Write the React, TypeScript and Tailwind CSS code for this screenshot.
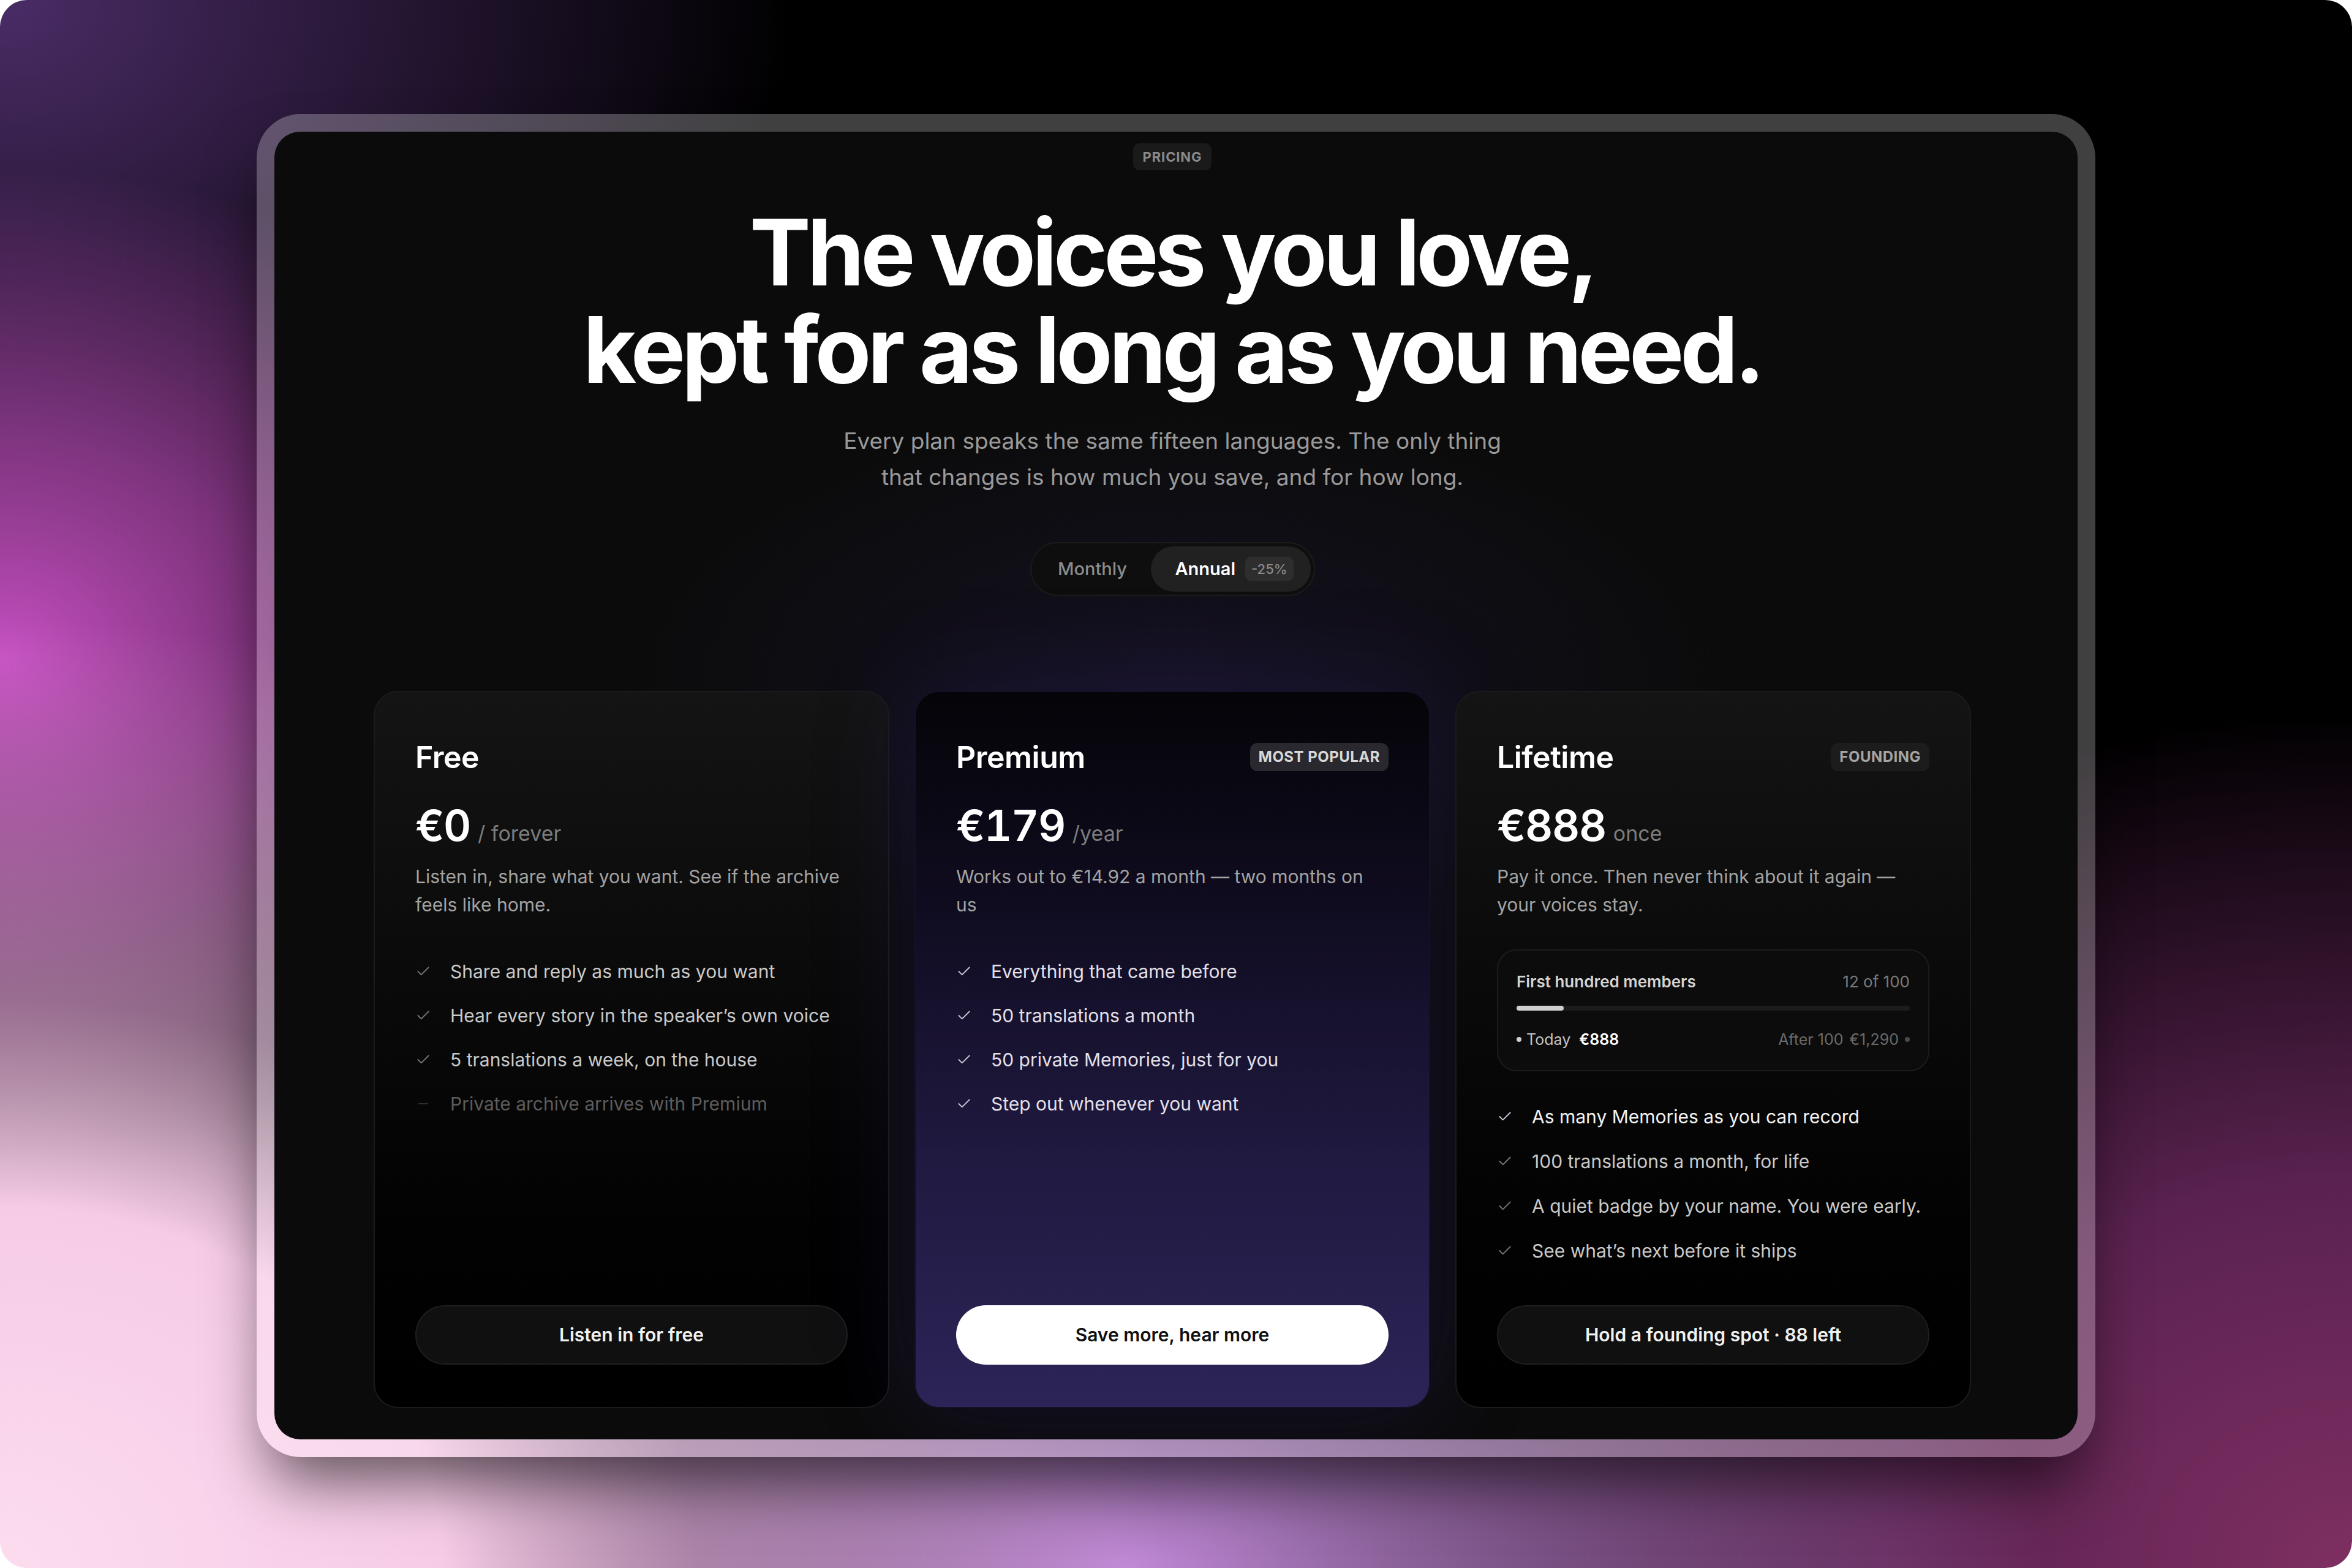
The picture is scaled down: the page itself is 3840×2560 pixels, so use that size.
import { Check, Minus } from 'lucide-react'

type Feature = { text: string; off?: boolean; strong?: boolean }

type Plan = {
  name: string
  badge?: string
  price: string
  unit: string
  note: string
  features: Feature[]
  cta: string
  featured?: boolean
  founding?: boolean
}

const plans: Plan[] = [
  {
    name: 'Free',
    price: '€0',
    unit: '/ forever',
    note: 'Listen in, share what you want. See if the archive feels like home.',
    features: [
      { text: 'Share and reply as much as you want' },
      { text: 'Hear every story in the speaker’s own voice' },
      { text: '5 translations a week, on the house' },
      { text: 'Private archive arrives with Premium', off: true },
    ],
    cta: 'Listen in for free',
  },
  {
    name: 'Premium',
    badge: 'MOST POPULAR',
    price: '€179',
    unit: '/year',
    note: 'Works out to €14.92 a month — two months on us',
    features: [
      { text: 'Everything that came before' },
      { text: '50 translations a month' },
      { text: '50 private Memories, just for you' },
      { text: 'Step out whenever you want' },
    ],
    cta: 'Save more, hear more',
    featured: true,
  },
  {
    name: 'Lifetime',
    badge: 'FOUNDING',
    price: '€888',
    unit: 'once',
    note: 'Pay it once. Then never think about it again — your voices stay.',
    features: [
      { text: 'As many Memories as you can record', strong: true },
      { text: '100 translations a month, for life' },
      { text: 'A quiet badge by your name. You were early.' },
      { text: 'See what’s next before it ships' },
    ],
    cta: 'Hold a founding spot · 88 left',
    founding: true,
  },
]

function FoundingMeter() {
  return (
    <div className="mt-[50px] rounded-[32px] border-2 border-[#1c1c1c] bg-[#0c0c0c] px-[30px] pt-[33px] pb-[32px]">
      <div className="flex items-center justify-between text-[26px] leading-[36px]">
        <span className="font-semibold text-[#d4d4d4]">First hundred members</span>
        <span className="text-[#7a7a7a]">12 of 100</span>
      </div>
      <div className="mt-[21px] h-[8px] rounded-full bg-[#1c1c1c]">
        <div className="h-full w-[12%] rounded-full bg-[#cfcfcf]" />
      </div>
      <div className="mt-[29px] flex items-center justify-between text-[25px] leading-[36px]">
        <span className="flex items-center gap-[8px] text-[#c4c4c4]">
          <span className="h-[8px] w-[8px] rounded-full bg-[#cfcfcf]" />
          Today
          <span className="ml-[6px] font-semibold text-white">€888</span>
        </span>
        <span className="flex items-center gap-[10px] text-[#6a6a6a]">
          After 100 <span>€1,290</span>
          <span className="h-[8px] w-[8px] rounded-full bg-[#4a4a4a]" />
        </span>
      </div>
    </div>
  )
}

function PlanCard({ plan }: { plan: Plan }) {
  const featured = plan.featured
  return (
    <div
      className={
        featured
          ? 'flex h-[1171px] flex-col rounded-[40px] border-2 border-[#141126] bg-[linear-gradient(180deg,#050408_0%,#100c20_30%,#201940_65%,#2c2457_100%)] px-[66px] pt-[76px] pb-[69px] shadow-[0_0_160px_10px_rgba(60,40,140,0.22)]'
          : 'flex h-[1171px] flex-col rounded-[40px] border-2 border-[#1b1b1b] bg-[linear-gradient(180deg,#141414_0%,#0a0a0a_40%,#020202_75%,#000_100%)] px-[66px] pt-[76px] pb-[69px]'
      }
    >
      {/* Name + badge */}
      <div className="flex h-[60px] items-center justify-between">
        <h3 className="text-[50px] font-semibold tracking-[-0.01em] text-white">{plan.name}</h3>
        {plan.badge && (
          <span
            className={
              featured
                ? 'flex h-[46px] items-center rounded-[12px] bg-[#29282e] px-[14px] text-[24px] font-bold tracking-[0.02em] text-[#d8d8d8]'
                : 'flex h-[46px] items-center rounded-[12px] bg-[#1c1c1c] px-[14px] text-[24px] font-bold tracking-[0.02em] text-[#a4a4a4]'
            }
          >
            {plan.badge}
          </span>
        )}
      </div>

      {/* Price */}
      <div className="mt-[47px] flex items-baseline gap-[12px]">
        <span className="text-[70px] leading-[70px] font-semibold tracking-[-0.02em] text-white tabular-nums">
          {plan.price}
        </span>
        <span className="text-[34px] text-[#7c7c7c]">{plan.unit}</span>
      </div>

      <p className="mt-[22px] text-[30px] leading-[46px] text-[#a3a3a3]">{plan.note}</p>

      {plan.founding && <FoundingMeter />}

      {/* Features */}
      <ul className={plan.founding ? 'mt-[52px] flex flex-col gap-[29px]' : 'mt-[64px] flex flex-col gap-[28px]'}>
        {plan.features.map((f) => (
          <li key={f.text} className="flex items-center gap-[31px] text-[30px] leading-[44px]">
            {f.off ? (
              <Minus size={26} strokeWidth={1.5} className="shrink-0 text-[#3c3c3c]" />
            ) : (
              <Check
                size={26}
                strokeWidth={1.75}
                className={
                  featured || f.strong ? 'shrink-0 text-[#c9c6d6]' : 'shrink-0 text-[#767676]'
                }
              />
            )}
            <span
              className={
                f.off
                  ? 'text-[#5c5c5c]'
                  : f.strong
                    ? 'text-[#f2f2f2]'
                    : featured
                      ? 'text-[#e2e0ea]'
                      : 'text-[#c9c9c9]'
              }
            >
              {f.text}
            </span>
          </li>
        ))}
      </ul>

      <button
        className={
          featured
            ? 'mt-auto h-[97px] w-full rounded-full bg-white text-[30px] font-semibold text-[#111]'
            : 'mt-auto h-[97px] w-full rounded-full border-2 border-[#1f1f1f] bg-[#101010] text-[30px] font-semibold text-[#f0f0f0]'
        }
      >
        {plan.cta}
      </button>
    </div>
  )
}

export default function App() {
  return (
    <div className="h-[2560px] w-[3840px] bg-white font-['Inter','Noto_Sans',sans-serif]">
      <div className="flex h-full w-full justify-center overflow-hidden rounded-[44px] bg-black bg-[radial-gradient(1900px_1550px_at_0%_100%,#fcdcef_0%,#f6cbe6_38%,rgba(240,190,225,0.5)_60%,rgba(246,203,230,0)_100%),radial-gradient(1050px_800px_at_0%_42%,#c650c2_0%,rgba(198,80,194,0.6)_45%,rgba(198,80,194,0)_100%),radial-gradient(1500px_800px_at_48%_100%,#c088d6_0%,rgba(192,136,214,0)_100%),radial-gradient(1700px_1400px_at_100%_100%,#7e2f62_0%,#5a2250_45%,rgba(90,34,80,0)_100%),radial-gradient(1300px_1000px_at_0%_0%,#4a2c66_0%,rgba(74,44,102,0)_100%)] pt-[186px]">
        {/* Bezel */}
        <div className="h-[2193px] w-[3002px] rounded-[72px] bg-white/25 p-[29px] shadow-[0_60px_100px_-20px_rgba(0,0,0,0.6)]">
          <div className="h-full overflow-hidden rounded-[42px] bg-[#0b0b0b] bg-[radial-gradient(1300px_650px_at_50%_42%,rgba(70,50,150,0.16),rgba(70,50,150,0)_70%)] pt-[19px] pr-[12px]">
            <div className="flex flex-col items-center">
              <span className="flex h-[44px] items-center rounded-[10px] bg-[#1a1a1a] px-[16px] text-[22px] font-bold tracking-[0.04em] text-[#8a8a8a]">
                PRICING
              </span>

              <h1 className="mt-[54px] text-center text-[150px] leading-[159px] font-bold tracking-[-0.04em] text-white">
                The voices you love,
                <br />
                kept for as long as you need.
              </h1>

              <p className="mt-[40px] text-center text-[37px] leading-[59px] text-[#9a9a9a]">
                Every plan speaks the same fifteen languages. The only thing
                <br />
                that changes is how much you save, and for how long.
              </p>

              {/* Billing toggle */}
              <div className="mt-[77px] flex h-[88px] w-[465px] items-center rounded-full border-2 border-[#1c1c1c] bg-[#0e0e0e] p-[5px]">
                <span className="flex w-[190px] justify-center text-[29px] font-medium text-[#8c8c8c]">
                  Monthly
                </span>
                <span className="flex h-full flex-1 items-center gap-[16px] rounded-full bg-[#212121] pl-[40px]">
                  <span className="text-[29px] font-semibold text-white">Annual</span>
                  <span className="flex h-[40px] items-center rounded-[10px] bg-[#2e2e2e] px-[10px] text-[22px] font-medium text-[#8a8a8a]">
                    -25%
                  </span>
                </span>
              </div>

              <div className="mt-[155px] grid w-[2608px] grid-cols-3 gap-[41px]">
                {plans.map((p) => (
                  <PlanCard key={p.name} plan={p} />
                ))}
              </div>
            </div>
          </div>
        </div>
      </div>
    </div>
  )
}
